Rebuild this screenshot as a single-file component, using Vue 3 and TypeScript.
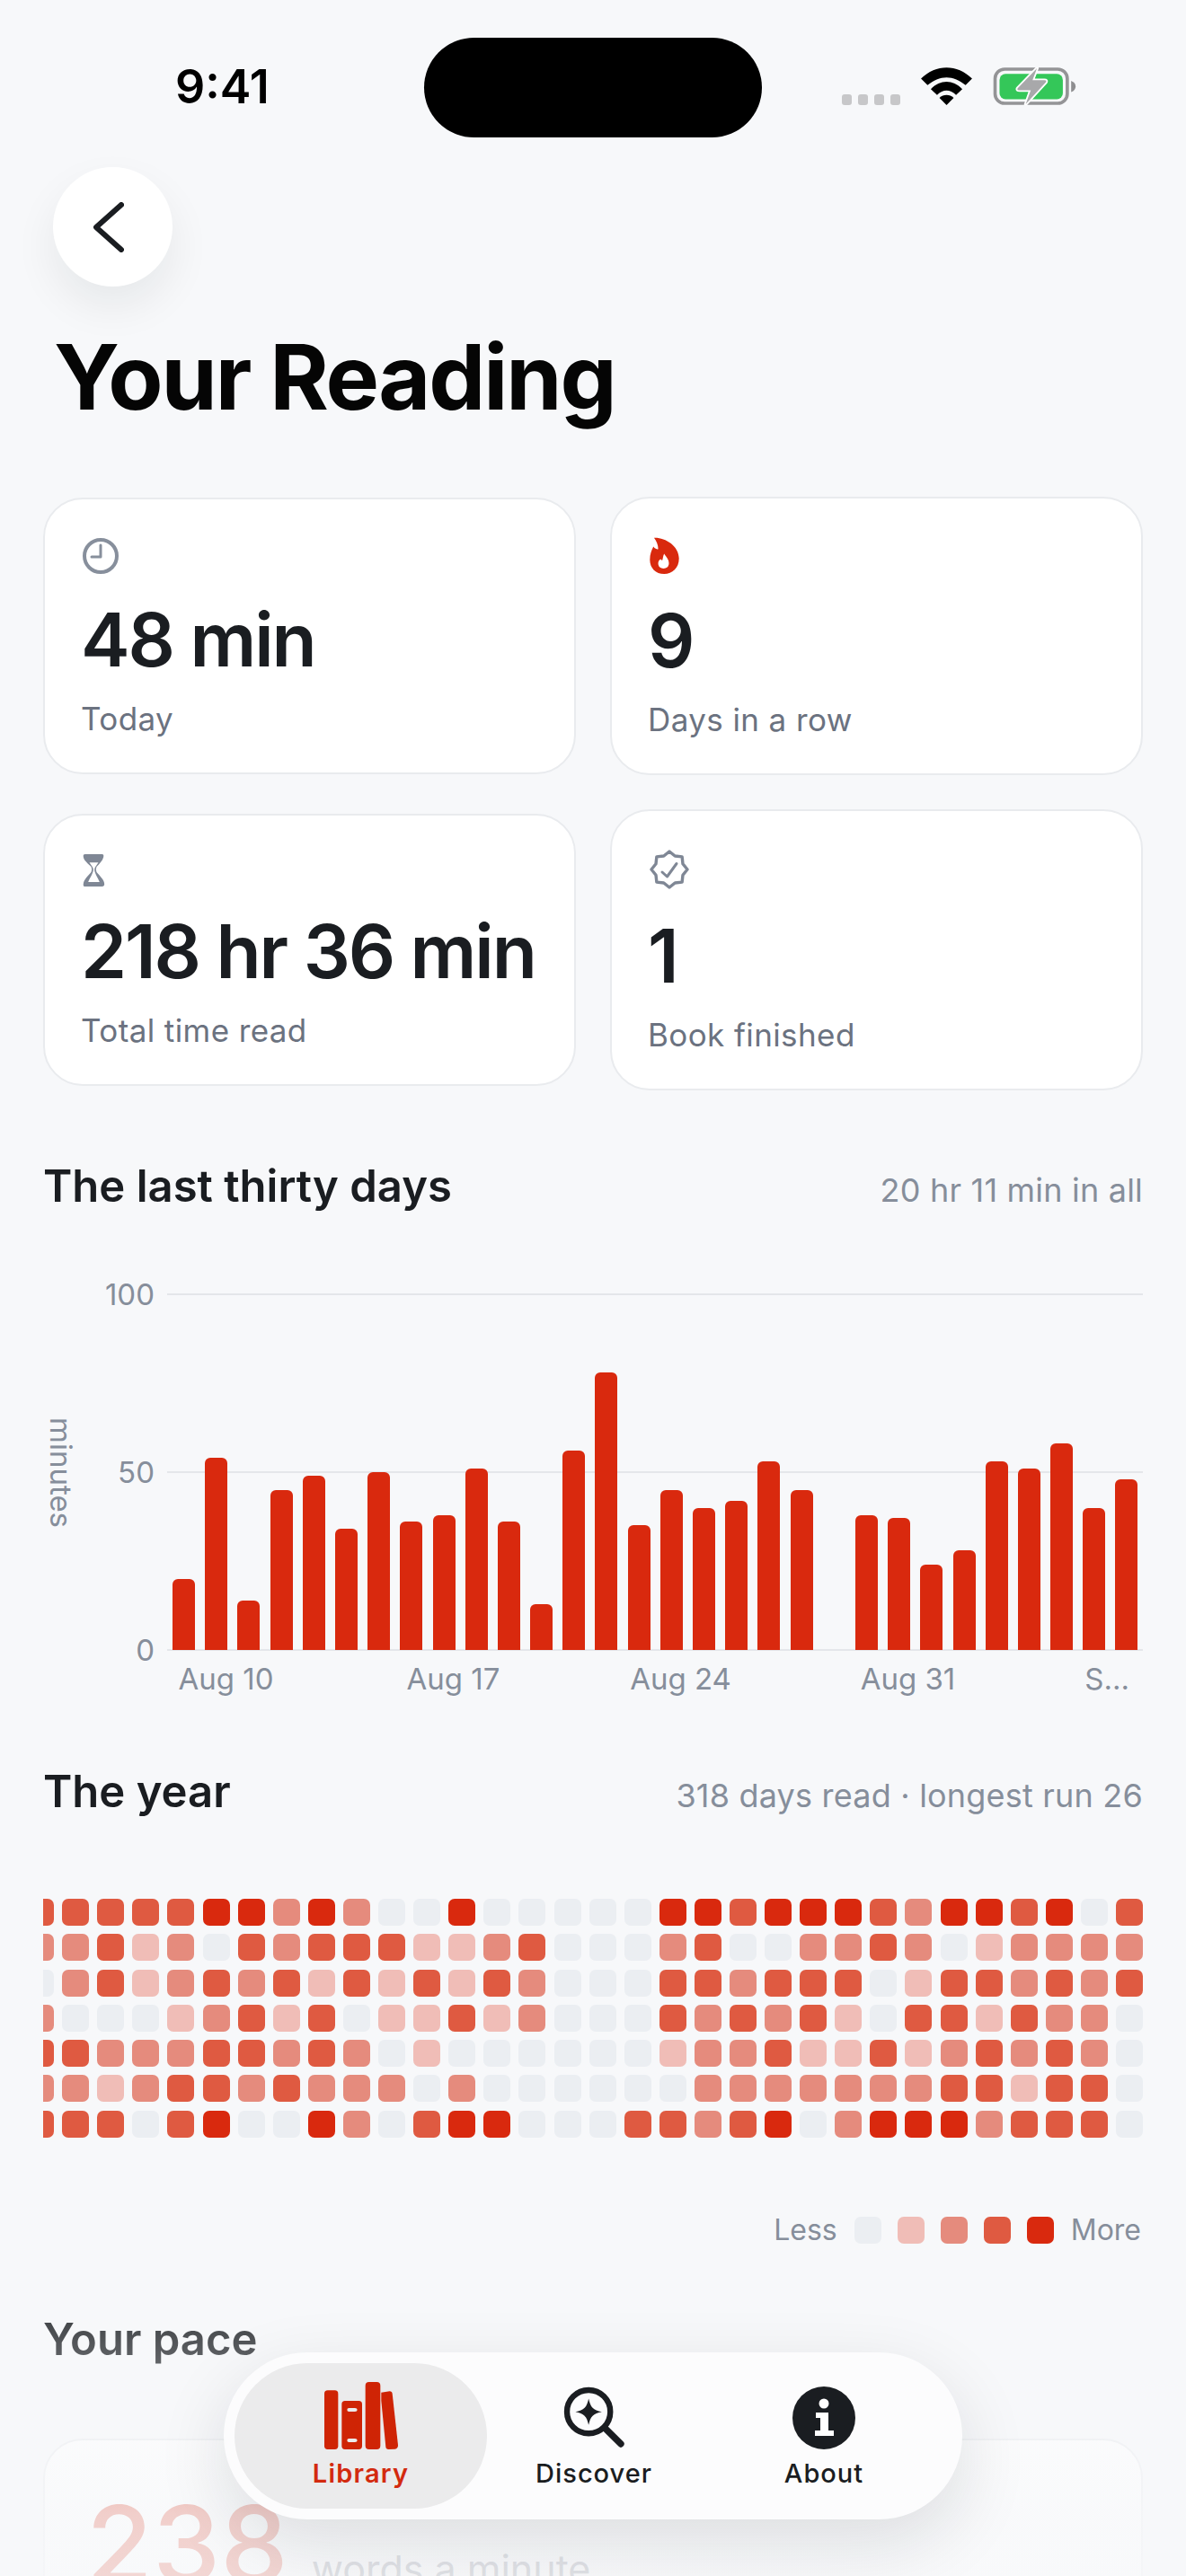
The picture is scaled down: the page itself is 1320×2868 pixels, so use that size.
<script setup lang="ts">
const minutes = [
  20, 54, 14, 45, 49, 34, 50, 36, 38, 51, 36, 13, 56, 78, 35,
  45, 40, 42, 53, 45, 0, 38, 37, 24, 28, 53, 51, 58, 40, 48,
];
const perMinute = 3.96;

const xLabels = ["Aug 10", "Aug 17", "Aug 24", "Aug 31", "S..."];

const rows = [
  [3, 3, 3, 3, 3, 4, 4, 2, 4, 2, 0, 0, 4, 0, 0, 0, 0, 0, 4, 4, 3, 4, 4, 4, 3, 2, 4, 4, 3, 4, 0, 3],
  [2, 2, 3, 1, 2, 0, 3, 2, 3, 3, 3, 1, 1, 2, 3, 0, 0, 0, 2, 3, 0, 0, 2, 2, 3, 2, 0, 1, 2, 2, 2, 2],
  [0, 2, 3, 1, 2, 3, 2, 3, 1, 3, 1, 3, 1, 3, 2, 0, 0, 0, 3, 3, 2, 3, 3, 3, 0, 1, 3, 3, 2, 3, 2, 3],
  [2, 0, 0, 0, 1, 2, 3, 1, 3, 0, 1, 1, 3, 1, 2, 0, 0, 0, 3, 2, 3, 2, 3, 1, 0, 3, 3, 1, 3, 2, 2, 0],
  [3, 3, 2, 2, 2, 3, 3, 2, 3, 2, 0, 1, 0, 0, 0, 0, 0, 0, 1, 2, 2, 3, 1, 1, 3, 1, 2, 3, 2, 3, 2, 0],
  [2, 2, 1, 2, 3, 3, 2, 3, 2, 2, 2, 0, 2, 0, 0, 0, 0, 0, 0, 2, 2, 2, 2, 2, 2, 2, 3, 3, 1, 3, 3, 0],
  [3, 3, 3, 0, 3, 4, 0, 0, 4, 2, 0, 3, 4, 4, 0, 0, 0, 3, 3, 2, 3, 4, 0, 2, 4, 4, 4, 2, 3, 3, 3, 0],
];
const cells = rows.flat();

const badge = Array.from({ length: 16 }, (_, i) => {
  const r = i % 2 === 0 ? 20 : 16.2;
  const a = (i * Math.PI) / 8;
  return `${(22 + r * Math.sin(a)).toFixed(2)},${(22 - r * Math.cos(a)).toFixed(2)}`;
}).join(" ");
</script>

<template>
  <div class="page">
    <div class="status">
      <span class="time">9:41</span>
      <div class="island" />
      <div class="status-icons">
        <div class="signal">
          <i /><i /><i /><i />
        </div>
        <svg class="wifi" viewBox="375 105 172 127" width="57" height="42">
          <path d="M375 143C425 93 497 93 547 143L525 165C485 130 437 130 397 165Z" />
          <path d="M408 178C440 145 482 145 514 178L493 198C472 178 450 178 429 198Z" />
          <path d="M437 208C450 195 472 195 485 208L461 232Z" />
        </svg>
        <svg class="battery" viewBox="615 105 280 127" width="93" height="42">
          <rect x="622" y="111" width="243" height="115" rx="32" fill="none" stroke="#949496" stroke-width="11" />
          <rect x="637" y="127" width="213" height="85" rx="20" fill="#34c759" />
          <path d="M878 150Q893 156 893 169Q893 182 878 188Z" fill="#8e8e90" />
          <path
            d="M763 108L698 175Q694 182 705 182H742L725 229L793 155Q797 148 788 148H748Z"
            fill="#a8a8aa"
            stroke="#fff"
            stroke-width="11"
            stroke-linejoin="round"
            paint-order="stroke"
          />
        </svg>
      </div>
    </div>

    <main class="content">
      <button class="back" aria-label="Back">
        <svg viewBox="0 0 34 56" width="34" height="56" fill="none">
          <path d="M31 3L3 28L31 53" stroke="#1a1d21" stroke-width="6" stroke-linecap="round" stroke-linejoin="round" />
        </svg>
      </button>
      <h1 class="title">Your Reading</h1>

      <section class="stats">
        <div class="card">
          <div class="card-icon card-icon--clock">
            <svg viewBox="0 0 40 40" width="40" height="40" fill="none" stroke="#878f9c">
              <circle cx="20" cy="20" r="18" stroke-width="4" />
              <path d="M20 8V21H10" stroke-width="3" stroke-linecap="round" stroke-linejoin="round" />
            </svg>
          </div>
          <div class="value">48 min</div>
          <div class="label">Today</div>
        </div>
        <div class="card">
          <div class="card-icon card-icon--flame">
            <svg viewBox="70 84 98 124" width="33" height="41">
              <path
                fill="#d9290e"
                fill-rule="evenodd"
                d="M84 86C120 84 168 112 168 156C168 188 146 208 118 208C90 208 70 188 70 160C70 142 76 128 82 116C86 122 92 126 98 124C98 110 92 96 84 86ZM118 140C126 152 134 160 134 172C134 184 126 190 116 190C106 190 98 184 98 172C98 166 102 160 106 158C108 160 110 162 112 162C114 156 114 148 118 140Z"
              />
            </svg>
          </div>
          <div class="value">9</div>
          <div class="label">Days in a row</div>
        </div>
        <div class="card">
          <div class="card-icon card-icon--glass">
            <svg viewBox="104 40 74 108" width="25" height="36">
              <path
                fill="#7f8795"
                fill-rule="evenodd"
                d="M112 40H168Q175 40 173 50C170 62 160 72 150 82Q146 90 150 100C160 112 176 126 176 140Q176 148 168 148H112Q104 148 106 138C108 124 122 112 132 100Q136 90 132 82C122 72 108 62 106 50Q104 40 112 40ZM126 68H156C150 78 143 84 143 92C143 102 152 116 160 133H122C130 116 139 102 139 92C139 84 132 78 126 68Z"
              />
            </svg>
          </div>
          <div class="value">218 hr 36 min</div>
          <div class="label">Total time read</div>
        </div>
        <div class="card">
          <div class="card-icon card-icon--badge">
            <svg viewBox="0 0 44 44" width="44" height="44" fill="none" stroke="#7f8795" stroke-linejoin="round" stroke-linecap="round">
              <polygon :points="badge" stroke-width="3.4" />
              <path d="M14 25L19.5 30L30 15.5" stroke-width="3" />
            </svg>
          </div>
          <div class="value">1</div>
          <div class="label">Book finished</div>
        </div>
      </section>

      <section class="thirty">
        <div class="section-head">
          <h2>The last thirty days</h2>
          <span class="meta">20 hr 11 min in all</span>
        </div>
        <div class="chart">
          <div class="axis-title">minutes</div>
          <div class="y-labels">
            <span>100</span>
            <span>50</span>
            <span>0</span>
          </div>
          <div class="plot">
            <div class="gridline gridline--top" />
            <div class="gridline gridline--mid" />
            <div class="gridline gridline--base" />
            <div class="bars">
              <div
                v-for="(m, i) in minutes"
                :key="i"
                class="bar"
                :style="{ height: m * perMinute + 'px' }"
              />
            </div>
            <div class="x-labels">
              <span v-for="l in xLabels" :key="l">{{ l }}</span>
            </div>
          </div>
        </div>
      </section>

      <section class="year">
        <div class="section-head">
          <h2>The year</h2>
          <span class="meta">318 days read · longest run 26</span>
        </div>
        <div class="heat-wrap">
          <div class="heat">
            <div v-for="(c, i) in cells" :key="i" :class="['cell', `l${c}`]" />
          </div>
        </div>
        <div class="legend">
          <span>Less</span>
          <div class="swatches">
            <div v-for="n in 5" :key="n" :class="['cell', `l${n - 1}`]" />
          </div>
          <span>More</span>
        </div>
      </section>

      <section class="pace">
        <h2>Your pace</h2>
        <div class="pace-card">
          <span class="pace-num">238</span>
          <span class="pace-unit">words a minute</span>
        </div>
      </section>
    </main>

    <div class="fade" />

    <nav class="tabbar">
      <div class="tab tab--active">
        <svg viewBox="360 157 246 225" width="82" height="75">
          <rect x="360" y="185" width="46" height="197" rx="11" fill="#cf2405" />
          <path
            fill="#cf2405"
            fill-rule="evenodd"
            d="M429 220H475Q486 220 486 231V371Q486 382 475 382H429Q418 382 418 371V231Q418 220 429 220ZM442 244Q436 244 436 250Q436 256 442 256H462Q470 256 470 250Q470 244 462 244ZM442 346Q436 346 436 352Q436 358 442 358H462Q470 358 470 352Q470 346 462 346Z"
          />
          <rect x="497" y="157" width="50" height="225" rx="12" fill="#cf2405" />
          <path d="M550 192L578 188Q586 188 587 196L606 368Q606 380 596 381L574 382Q566 382 565 374L550 220Z" fill="#cf2405" />
        </svg>
        <span>Library</span>
      </div>
      <div class="tab">
        <svg viewBox="1150 165 215 215" width="72" height="72" fill="none" stroke="#1a1d21">
          <circle cx="1240" cy="255" r="72" stroke-width="19" />
          <path d="M1295 310L1347 362" stroke-width="22" stroke-linecap="round" />
          <path
            fill="#1a1d21"
            stroke="none"
            d="M1240 211C1246 240 1255 249 1284 255C1255 261 1246 270 1240 299C1234 270 1225 261 1196 255C1225 249 1234 240 1240 211Z"
          />
        </svg>
        <span>Discover</span>
      </div>
      <div class="tab">
        <svg viewBox="0 0 70 70" width="70" height="70">
          <circle cx="35" cy="35" r="35" fill="#1a1d21" />
          <circle cx="35" cy="19" r="5.5" fill="#fff" />
          <path d="M26 29H40V49H46V55H25V49H31V35H26Z" fill="#fff" />
        </svg>
        <span>About</span>
      </div>
    </nav>
  </div>
</template>

<style scoped>
.page {
  position: relative;
  width: 1320px;
  height: 2868px;
  overflow: hidden;
  background: #f7f8fa;
  font-family: Inter, "Liberation Sans", sans-serif;
  color: #1a1d21;
}

.status {
  display: flex;
  align-items: flex-start;
  padding: 42px 122px 0 195px;
  height: 153px;
  box-sizing: border-box;
}

.time {
  width: 277px;
  margin-top: 24px;
  font-size: 52px;
  line-height: 62px;
  font-weight: 600;
  color: #000;
}

.island {
  width: 376px;
  height: 111px;
  border-radius: 56px;
  background: #000;
}

.status-icons {
  display: flex;
  align-items: flex-end;
  margin-left: 89px;
  margin-top: 33px;
  height: 42px;
}

.signal {
  display: flex;
  gap: 6.5px;
  margin-right: 23px;
}

.signal i {
  display: block;
  width: 11.5px;
  height: 12px;
  border-radius: 3px;
  background: #c7c7c9;
}

.wifi {
  fill: #000;
  margin-right: 23px;
}

.content {
  padding: 0 48px;
}

.back {
  display: flex;
  align-items: center;
  justify-content: center;
  width: 133px;
  height: 133px;
  margin: 33px 0 0 11px;
  padding: 0 10px 0 0;
  border: none;
  border-radius: 50%;
  background: #fff;
  box-shadow: 0 22px 48px rgba(20, 24, 30, 0.07);
}

.title {
  margin: 41px 0 0 12px;
  font-size: 100px;
  line-height: 120px;
  font-weight: 700;
  letter-spacing: -2px;
  color: #050505;
}

.stats {
  display: grid;
  grid-template-columns: minmax(0, 1fr) minmax(0, 1fr);
  column-gap: 38px;
  row-gap: 38px;
  align-items: center;
  margin-top: 73px;
}

.card {
  padding: 43px 40px 39px;
  border: 2px solid #e9ebee;
  border-radius: 44px;
  background: #fff;
}

.card-icon {
  display: flex;
  align-items: flex-start;
  margin-left: 2px;
}

.card-icon--clock {
  height: 40px;
}

.card-icon--flame {
  height: 42px;
}

.card-icon--glass {
  height: 35px;
}

.card-icon--badge {
  height: 45px;
}

.value {
  margin-top: 24px;
  font-size: 82px;
  line-height: 100px;
  font-weight: 600;
  letter-spacing: -2.1px;
  white-space: nowrap;
}

.label {
  margin-top: 16px;
  font-size: 35px;
  line-height: 42px;
  letter-spacing: 0.4px;
  color: #6b7280;
}

.thirty {
  margin-top: 78px;
}

.section-head {
  display: flex;
  align-items: baseline;
  justify-content: space-between;
}

h2 {
  margin: 0;
  font-size: 49px;
  line-height: 58px;
  font-weight: 600;
  color: #1a1d21;
}

.meta {
  font-size: 36px;
  letter-spacing: 0.2px;
  color: #868e9b;
}

.chart {
  display: flex;
  align-items: flex-start;
  margin-top: 91px;
}

.axis-title {
  width: 40px;
  margin-top: 137px;
  writing-mode: vertical-rl;
  font-size: 33px;
  line-height: 40px;
  color: #868e9b;
}

.y-labels {
  display: flex;
  flex-direction: column;
  justify-content: space-between;
  width: 84px;
  height: 396px;
  margin-right: 14px;
  font-size: 33px;
  line-height: 40px;
  text-align: right;
  color: #868e9b;
}

.y-labels span {
  height: 0;
  margin-top: -20px;
  margin-bottom: 20px;
}

.plot {
  position: relative;
  flex: 1;
  height: 396px;
}

.gridline {
  position: absolute;
  left: 0;
  right: 0;
  height: 2px;
  margin-top: -1px;
  background: #e4e6ea;
}

.gridline--top {
  top: 0;
}

.gridline--mid {
  top: 198px;
}

.gridline--base {
  top: 396px;
}

.bars {
  position: relative;
  display: grid;
  grid-template-columns: repeat(30, 25px);
  column-gap: 11.2px;
  align-items: end;
  height: 396px;
  margin-left: 6px;
}

.bar {
  border-radius: 6px 6px 0 0;
  background: #d9290e;
}

.x-labels {
  display: grid;
  grid-template-columns: repeat(4, 253px) 120px;
  margin: 12px 0 0 -61px;
  font-size: 33px;
  line-height: 40px;
  text-align: center;
  color: #868e9b;
}

.x-labels span:last-child {
  text-align: right;
}

.year {
  margin-top: 129px;
}

.heat-wrap {
  margin-top: 90px;
  overflow: hidden;
}

.heat {
  display: grid;
  grid-template-columns: repeat(32, 30px);
  grid-auto-rows: 30px;
  column-gap: 9.1px;
  row-gap: 9.3px;
  justify-content: end;
}

.cell {
  width: 30px;
  height: 30px;
  border-radius: 7px;
}

.l0 {
  background: #ebeef2;
}

.l1 {
  background: #f0bdb7;
}

.l2 {
  background: #e58b7d;
}

.l3 {
  background: #df5a41;
}

.l4 {
  background: #d9290e;
}

.legend {
  display: flex;
  align-items: center;
  justify-content: flex-end;
  gap: 19px;
  margin: 88px 2px 0 0;
  font-size: 32px;
  line-height: 30px;
  color: #868e9b;
}

.swatches {
  display: flex;
  gap: 18px;
}

.pace {
  margin-top: 78px;
}

.pace-card {
  display: flex;
  align-items: baseline;
  gap: 26px;
  height: 300px;
  margin-top: 81px;
  padding: 44px 46px 0;
  box-sizing: border-box;
  border: 2px solid #e9ebee;
  border-radius: 44px;
  background: #fff;
}

.pace-num {
  font-size: 120px;
  line-height: 144px;
  font-weight: 500;
  color: #d9290e;
}

.pace-unit {
  font-size: 43px;
  color: #6b7280;
}

.fade {
  position: absolute;
  left: 0;
  right: 0;
  bottom: 0;
  height: 350px;
  background: linear-gradient(
    to bottom,
    rgba(247, 248, 250, 0),
    rgba(247, 248, 250, 0.8) 80%,
    rgba(247, 248, 250, 0.84)
  );
  pointer-events: none;
}

.tabbar {
  position: absolute;
  left: 249px;
  top: 2619px;
  display: grid;
  grid-template-columns: 281px 238px 274px;
  width: 822px;
  height: 186px;
  padding: 12px;
  box-sizing: border-box;
  border-radius: 93px;
  background: #fcfcfd;
  box-shadow: 0 26px 80px rgba(20, 24, 30, 0.12);
}

.tab {
  display: flex;
  flex-direction: column;
  align-items: center;
  justify-content: flex-end;
  gap: 9px;
  padding-bottom: 21px;
  font-size: 29px;
  line-height: 36px;
  font-weight: 500;
  letter-spacing: 1px;
  color: #1a1d21;
}

.tab--active {
  border-radius: 81px;
  background: #ebebec;
  font-weight: 600;
  letter-spacing: 1.2px;
  color: #d32a0f;
}
</style>

<style>
html,
body {
  margin: 0;
  background: #f7f8fa;
}
</style>
